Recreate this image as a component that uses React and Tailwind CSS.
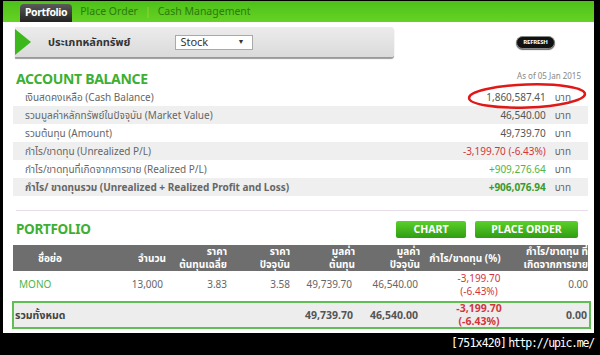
import React from 'react';

const FONT = { fontFamily: '"Noto Sans", "Noto Sans Thai", Tahoma, sans-serif' };

const BALANCE = [
  { label: 'เงินสดคงเหลือ (Cash Balance)', value: '1,860,587.41', tone: 'text-[#555]' },
  { label: 'รวมมูลค่าหลักทรัพย์ในปัจจุบัน (Market Value)', value: '46,540.00', tone: 'text-[#555]' },
  { label: 'รวมต้นทุน (Amount)', value: '49,739.70', tone: 'text-[#555]' },
  { label: 'กำไร/ขาดทุน (Unrealized P/L)', value: '-3,199.70 (-6.43%)', tone: 'text-[#d2363c]' },
  { label: 'กำไร/ขาดทุนที่เกิดจากการขาย (Realized P/L)', value: '+909,276.64', tone: 'text-[#4fb548]' },
];

// column widths of the portfolio table
const COLS = 'grid grid-cols-[74px_80px_62px_63px_65px_65px_86px_80px]';

export default function App() {
  return (
    <div className="w-[600px] h-[355px] bg-black flex flex-col overflow-hidden pt-[1px]" style={FONT}>
      <div className="ml-[3px] w-[591px] h-[332px] bg-white flex flex-col relative">
        {/* Nav */}
        <div className="h-[21px] bg-gradient-to-b from-[#4cc01a] to-[#66d323] flex items-end pl-[17px] text-[10.5px]">
          <div className="h-[18px] px-[5px] rounded-t-[4px] bg-gradient-to-b from-[#5a5a5a] to-[#232323] text-white font-bold flex items-center tracking-[-0.4px]">
            Portfolio
          </div>
          <span className="self-center ml-[8px] text-[#2c7a0c]">Place Order</span>
          <span className="self-center mx-[7px] text-[#8bd86a]">|</span>
          <span className="self-center text-[#2c7a0c]">Cash Management</span>
        </div>

        <div className="pl-[10px] pr-[6px] flex flex-col">
          {/* Type filter bar */}
          <div className="mt-[5px] flex items-center justify-between">
            <div className="ml-[2px] w-[379px] h-[30px] rounded-r-[3px] bg-gradient-to-b from-[#ececec] to-[#dadada] shadow-[0_2px_1px_#9a9a9a] flex items-center">
              <svg width="16" height="26" viewBox="0 0 16 26" className="shrink-0">
                <polygon points="0,0 16,13 0,26" fill="#3cb81c" />
              </svg>
              <span className="ml-[17px] text-[11px] font-bold text-[#333]">ประเภทหลักทรัพย์</span>
              <div className="ml-[45px] w-[78px] h-[15px] bg-white border border-[#a9a9a9] flex items-center justify-between pl-[4px] pr-[8px] text-[11px] text-[#333]">
                <span>Stock</span>
                <span className="text-[7px]">▼</span>
              </div>
            </div>
            <div className="mr-[33px] w-[39px] h-[13px] rounded-full bg-[#111] border border-[#888] shadow-[0_1px_1px_#666] flex items-center justify-center text-white text-[6px] font-bold tracking-[-0.2px]">
              REFRESH
            </div>
          </div>

          {/* Account balance */}
          <div className="mt-[12px] flex justify-between items-start pl-[3px]">
            <h2 className="text-[14px] leading-[19px] font-bold text-[#3daf32] tracking-[-0.3px]">ACCOUNT BALANCE</h2>
            <span className="mr-[7px] mt-[1px] text-[8px] text-[#888]">As of 05 Jan 2015</span>
          </div>
          <div className="flex flex-col text-[10px]">
            {BALANCE.map((r, i) => (
              <div key={r.label} className={`h-[18px] flex items-center justify-between pl-[12px] pr-[17px] ${i % 2 ? 'bg-[#efefef]' : ''}`}>
                <span className="text-[#666]">{r.label}</span>
                <span className={r.tone}>
                  {r.value}<span className="ml-[9px] text-[#666]">บาท</span>
                </span>
              </div>
            ))}
            <div className="h-[18px] flex items-center justify-between pl-[12px] pr-[17px] bg-[#efefef] font-bold">
              <span className="text-[#666]">กำไร/ ขาดทุนรวม (Unrealized + Realized Profit and Loss)</span>
              <span className="text-[#3a9a2c]">
                +906,076.94<span className="ml-[9px] font-normal text-[#666]">บาท</span>
              </span>
            </div>
          </div>

          <div className="mt-[14px] ml-[3px] border-t border-[#e8dde8]" />

          {/* Portfolio */}
          <div className="mt-[10px] flex items-center justify-between pl-[3px]">
            <h2 className="text-[13.5px] leading-[17px] font-bold text-[#3daf32] tracking-[-0.3px]">PORTFOLIO</h2>
            <div className="flex gap-[9px] mr-[10px]">
              <div className="w-[70px] h-[17px] rounded-[2px] bg-gradient-to-b from-[#5ad12a] to-[#2f9d12] text-white text-[10.5px] font-bold flex items-center justify-center">CHART</div>
              <div className="w-[103px] h-[17px] rounded-[2px] bg-gradient-to-b from-[#5ad12a] to-[#2f9d12] text-white text-[10.5px] font-bold flex items-center justify-center">PLACE ORDER</div>
            </div>
          </div>

          <div className={`mt-[7px] ${COLS} h-[26px] bg-[#6e6e6e] text-white font-bold text-[10px] leading-[13px] items-center`}>
            <div className="text-center">ชื่อย่อ</div>
            <div className="text-right pr-[1px]">จำนวน</div>
            <div className="text-right pr-[2px]">ราคา<br />ต้นทุนเฉลี่ย</div>
            <div className="text-right pr-[2px]">ราคา<br />ปัจจุบัน</div>
            <div className="text-right pr-[2px]">มูลค่า<br />ต้นทุน</div>
            <div className="text-right pr-[2px]">มูลค่า<br />ปัจจุบัน</div>
            <div className="text-center">กำไร/ขาดทุน (%)</div>
            <div className="text-right whitespace-nowrap">กำไร/ขาดทุน ที่<br />เกิดจากการขาย</div>
          </div>

          <div className={`${COLS} h-[27px] items-center text-[10px] leading-[13px] text-[#666]`}>
            <div className="pl-[6px] text-[#4fb548]">MONO</div>
            <div className="text-right pr-[4px]">13,000</div>
            <div className="text-right pr-[2px]">3.83</div>
            <div className="text-right pr-[2px]">3.58</div>
            <div className="text-right pr-[5px]">49,739.70</div>
            <div className="text-right pr-[4px]">46,540.00</div>
            <div className="text-center pl-[28px] whitespace-nowrap text-[#d2363c]">-3,199.70<br />(-6.43%)</div>
            <div className="text-right">0.00</div>
          </div>

          <div className="mt-[3px] -ml-[1px] -mr-[3px] h-[28px] border-2 border-[#5fbf55] bg-[#ededed] flex items-center text-[10.5px] leading-[13px] font-bold text-[#555]">
            <div className={`${COLS} w-full items-center -ml-[1px]`}>
              <div className="pl-[2px] text-[#444]">รวมทั้งหมด</div>
              <div />
              <div />
              <div />
              <div className="text-right pr-[4px]">49,739.70</div>
              <div className="text-right pr-[4px]">46,540.00</div>
              <div className="text-center pl-[28px] whitespace-nowrap text-[#d2363c]">-3,199.70<br />(-6.43%)</div>
              <div className="text-right pr-[1px]">0.00</div>
            </div>
          </div>
        </div>

        {/* Red mark around cash balance */}
        <svg className="absolute left-[462px] top-[81px]" width="124" height="28" viewBox="0 0 124 28">
          <ellipse cx="62" cy="14" rx="58" ry="11.5" fill="none" stroke="#e01818" strokeWidth="2.5" transform="rotate(-2 62 14)" />
        </svg>
      </div>

      <div className="flex-1 flex items-center justify-end pr-[6px] text-white text-[11.5px] leading-none" style={{ fontFamily: '"DejaVu Sans Mono", monospace' }}>
        <span className="tracking-[-0.8px]">[751x420]</span>
        <span className="ml-[2px] tracking-[-1.2px]">http://upic.me/</span>
      </div>
    </div>
  );
}
